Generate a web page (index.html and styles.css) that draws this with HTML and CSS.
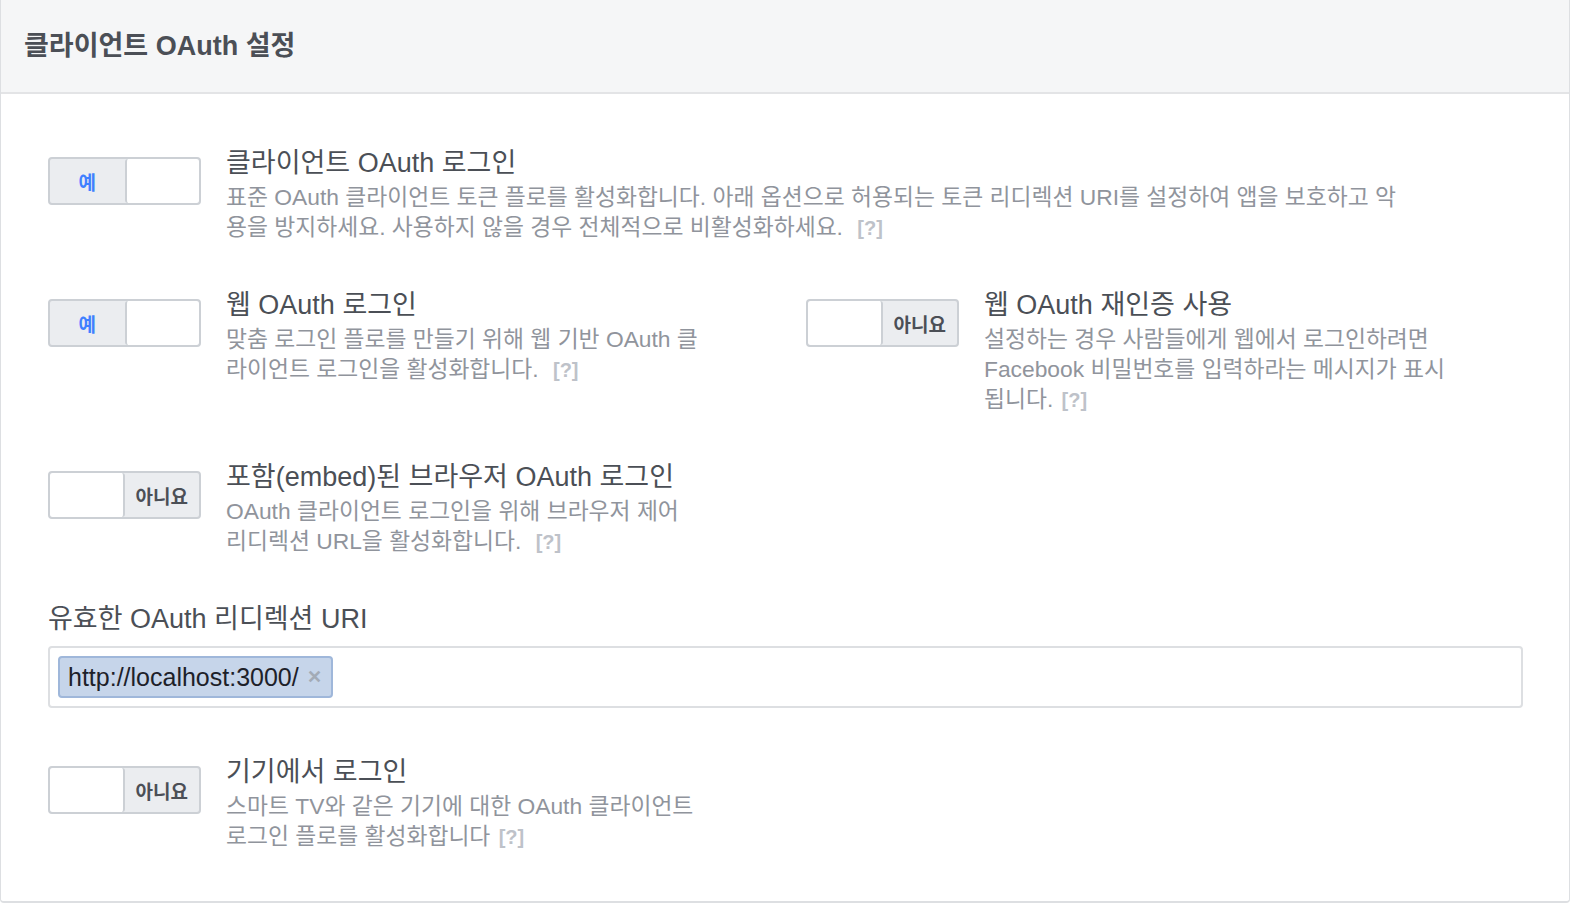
FILE: index.html
```html
<!DOCTYPE html>
<html lang="ko">
<head>
<meta charset="utf-8">
<title>클라이언트 OAuth 설정</title>
<link rel="stylesheet" href="styles.css">
</head>
<body>
<div class="card">
  <div class="card-header">
    <h2 class="card-title">클라이언트 OAuth 설정</h2>
  </div>
  <div class="card-body">
    <div class="setting setting-full">
      <div class="toggle toggle-on"><span class="half half-label">예</span><span class="half half-blank"></span></div>
      <div class="setting-text">
        <div class="setting-title">클라이언트 OAuth 로그인</div>
        <div class="setting-desc">표준 OAuth 클라이언트 토큰 플로를 활성화합니다. 아래 옵션으로 허용되는 토큰 리디렉션 URI를 설정하여 앱을 보호하고 악<br>용을 방지하세요. 사용하지 않을 경우 전체적으로 비활성화하세요. <span class="help">[?]</span></div>
      </div>
    </div>

    <div class="two-col">
      <div class="setting">
        <div class="toggle toggle-on"><span class="half half-label">예</span><span class="half half-blank"></span></div>
        <div class="setting-text">
          <div class="setting-title">웹 OAuth 로그인</div>
          <div class="setting-desc">맞춤 로그인 플로를 만들기 위해 웹 기반 OAuth 클<br>라이언트 로그인을 활성화합니다. <span class="help">[?]</span></div>
        </div>
      </div>
      <div class="setting">
        <div class="toggle toggle-off"><span class="half half-blank"></span><span class="half half-label">아니요</span></div>
        <div class="setting-text">
          <div class="setting-title">웹 OAuth 재인증 사용</div>
          <div class="setting-desc">설정하는 경우 사람들에게 웹에서 로그인하려면<br>Facebook 비밀번호를 입력하라는 메시지가 표시<br>됩니다. <span class="help help-tight">[?]</span></div>
        </div>
      </div>
    </div>

    <div class="setting">
      <div class="toggle toggle-off"><span class="half half-blank"></span><span class="half half-label">아니요</span></div>
      <div class="setting-text">
        <div class="setting-title">포함(embed)된 브라우저 OAuth 로그인</div>
        <div class="setting-desc">OAuth 클라이언트 로그인을 위해 브라우저 제어<br>리디렉션 URL을 활성화합니다. <span class="help">[?]</span></div>
      </div>
    </div>

    <div class="field">
      <div class="field-label">유효한 OAuth 리디렉션 URI</div>
      <div class="token-input">
        <span class="token">http://localhost:3000/<span class="token-remove">✕</span></span>
      </div>
    </div>

    <div class="setting setting-last">
      <div class="toggle toggle-off"><span class="half half-blank"></span><span class="half half-label">아니요</span></div>
      <div class="setting-text">
        <div class="setting-title">기기에서 로그인</div>
        <div class="setting-desc">스마트 TV와 같은 기기에 대한 OAuth 클라이언트<br>로그인 플로를 활성화합니다 <span class="help help-tight">[?]</span></div>
      </div>
    </div>
  </div>
</div>
</body>
</html>
```

FILE: styles.css
```css
* { box-sizing: border-box; }

body {
  margin: 0;
  background: #ffffff;
  font-family: "Liberation Sans", "Noto Sans CJK KR", sans-serif;
  color: #4b4f56;
}

.card {
  width: 100%;
  border: 1px solid #dddfe2;
  border-top: none;
  border-bottom-width: 2px;
  border-radius: 0 0 4px 4px;
  background: #ffffff;
}

.card-header {
  height: 94px;
  background: #f5f6f7;
  border-bottom: 2px solid #e3e4e6;
  padding-left: 23px;
  display: flex;
  align-items: center;
}

.card-title {
  margin: 0 0 1px 0;
  font-size: 27px;
  font-weight: bold;
  color: #4b4f56;
  line-height: 38px;
}

.card-body {
  padding: 48px 47px 49px 47px;
}

.setting {
  display: flex;
  gap: 25px;
  align-items: flex-start;
  margin-bottom: 41px;
}

.setting-last { margin-bottom: 0; }

.two-col {
  display: grid;
  grid-template-columns: 758px 1fr;
}

.toggle {
  flex: none;
  width: 153px;
  height: 48px;
  margin-top: 15px;
  border: 2px solid #ccd0d5;
  border-radius: 4px;
  display: flex;
  overflow: hidden;
  background: #ebedf0;
}

.half {
  width: 50%;
  height: 100%;
  display: flex;
  align-items: center;
  justify-content: center;
  font-size: 19px;
  font-weight: bold;
}

.half-blank {
  background: #ffffff;
  border-radius: 3px;
}

.toggle-on .half-blank { border-left: 2px solid #ccd0d5; }
.toggle-off .half-blank { border-right: 2px solid #ccd0d5; }

.toggle-on .half-label { color: #4080ff; }
.toggle-off .half-label { color: #4b4f56; }

.setting-text {
  min-width: 0;
  padding-top: 2px;
}

.setting-title {
  font-size: 27px;
  line-height: 38px;
  color: #4b4f56;
  white-space: nowrap;
}

.setting-desc {
  font-size: 22.8px;
  line-height: 30px;
  color: #90949c;
  white-space: nowrap;
}

.help {
  color: #bec2c9;
  font-weight: bold;
  font-size: 20px;
  margin-left: 8px;
}

.help-tight { margin-left: 2px; }

.field { margin-bottom: 43px; }

.field-label {
  font-size: 27px;
  line-height: 38px;
  color: #4b4f56;
  padding-top: 2px;
  margin-bottom: 8px;
}

.token-input {
  width: 1475px;
  height: 62px;
  border: 2px solid #dddfe2;
  border-radius: 4px;
  padding: 8px;
  display: flex;
  align-items: center;
}

.token {
  display: inline-flex;
  align-items: center;
  height: 42px;
  padding: 0 9px 0 8px;
  background: #c6d5ea;
  border: 2px solid #9fb7da;
  border-radius: 4px;
  font-size: 25px;
  color: #1d2129;
}

.token-remove {
  margin-left: 8px;
  color: #a3abb6;
  font-size: 18px;
  font-weight: bold;
}
```
